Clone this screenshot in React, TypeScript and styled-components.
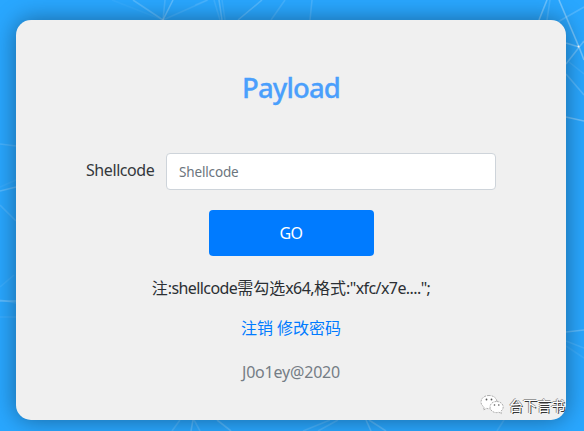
import React from "react";
import styled, { createGlobalStyle } from "styled-components";

const Global = createGlobalStyle`
  * { box-sizing: border-box; }
  body {
    margin: 0;
    background: #29a7ff;
    font-family: "Noto Sans", "Noto Sans CJK SC", sans-serif;
    font-size: 16px;
    line-height: 24px;
    color: #212529;
    overflow: hidden;
  }
`;

const Page = styled.main`
  position: relative;
  height: 431px;
  padding: 20px 18px 11px 16px;
  overflow: hidden;
`;

const Network = styled.svg`
  position: absolute;
  inset: 0;
  stroke: #b4e1ff;
  stroke-width: 1.6;
`;

const Card = styled.section`
  position: relative;
  height: 400px;
  border-radius: 15px;
  background: #f0f0f0;
  box-shadow: 0 0 24px rgba(0, 0, 0, 0.4);
  display: flex;
  flex-direction: column;
  align-items: center;
`;

const Title = styled.h3`
  margin: 51px 0 0;
  font: 500 27.5px/34px "Noto Sans", sans-serif;
  letter-spacing: -0.85px;
  color: #4a9ffc;
  -webkit-text-stroke: 0.3px #4a9ffc;
`;

const Field = styled.label`
  align-self: stretch;
  display: flex;
  margin: 48px 70px 0;
  height: 37px;
`;

const FieldName = styled.span`
  width: 80px;
  padding-top: 5px;
  letter-spacing: -0.42px;
  color: #34383c;
`;

const Input = styled.input`
  flex: 1;
  min-width: 0;
  border: 1px solid #ced4da;
  border-radius: 4px;
  background: #fff;
  padding: 1px 12px 0;
  font: 13.5px "Noto Sans", sans-serif;
  letter-spacing: -0.15px;
  &::placeholder { color: #6c757d; opacity: 1; }
`;

const Go = styled.button`
  width: 165px;
  height: 46px;
  margin-top: 20px;
  padding: 0;
  border: 0;
  border-radius: 4px;
  background: #007bff;
  color: #fff;
  font: 16px/24px "Noto Sans", sans-serif;
  letter-spacing: -0.5px;
`;

const Note = styled.p<{ $top: number; $spacing?: number; $muted?: boolean }>`
  margin: ${(p) => p.$top}px 0 0;
  height: 24px;
  white-space: nowrap;
  letter-spacing: ${(p) => p.$spacing ?? 0}px;
  color: ${(p) => (p.$muted ? "#757d85" : "#2b2f33")};
`;

const Latin = styled.span`
  letter-spacing: -0.58px;
`;

const Link = styled.a`
  color: #007bff;
`;

const Watermark = styled.div`
  position: absolute;
  left: 464px;
  bottom: 3px;
  display: flex;
  align-items: center;
  gap: 5px;
  width: 86px;
  height: 24px;
  overflow: hidden;
  white-space: nowrap;
  font: 14px/22px "Noto Sans CJK SC", sans-serif;
  color: #fff;
  text-shadow: 1px 1px 0 #333, -1px 0 0 #888, 0 -1px 0 #999;
`;

const lines: [number, number, number, number, number][] = [
  [112, 0, 163, 20, 0.06], [133, 0, 163, 20, 0.28], [165, 0, 163, 20, 0.2],
  [173, 0, 163, 20, 0.36], [208, 0, 163, 20, 0.14], [195, 5, 207, 0, 0.1],
  [214, 0, 220, 20, 0.14], [219, 0, 222, 20, 0.3], [222, 0, 225, 20, 0.14],
  [262, 0, 238, 20, 0.28], [285, 0, 271, 20, 0.18], [312, 0, 310, 20, 0.2],
  [547, 0, 539, 20, 0.45], [550, 0, 547, 20, 0.2], [559, 0, 579, 47, 0.5],
  [579, 47, 584, 60, 0.5], [584, 7, 556, 23, 0.25], [566, 43, 579, 47, 0.42],
  [584, 41, 566, 64, 0.38], [569, 62, 584, 74, 0.13], [566, 74, 584, 95, 0.28],
  [566, 117, 584, 121, 0.45], [566, 332, 584, 330, 0.35],
  [566, 341, 584, 348, 0.16], [566, 346, 584, 358, 0.1],
  [0, 144, 16, 146, 0.2], [0, 191, 16, 187, 0.3], [0, 187, 16, 180, 0.08],
  [0, 205, 16, 221, 0.18], [0, 287, 14, 275, 0.1],
  [0, 301, 16, 301, 0.32], [0, 300, 16, 303, 0.15], [0, 317, 16, 317, 0.1],
  [180, 420, 172, 431, 0.2], [193, 420, 191, 431, 0.28], [194, 420, 200, 431, 0.2],
  [217, 420, 231, 431, 0.28], [330, 420, 303, 431, 0.2], [338, 420, 318, 431, 0.2],
  [366, 420, 371, 431, 0.28], [369, 420, 386, 431, 0.28], [504, 420, 497, 431, 0.16],
];

export default function App() {
  return (
    <>
      <Global />
      <Page>
        <Network width="584" height="431" aria-hidden="true">
          {lines.map(([x1, y1, x2, y2, o], i) => (
            <line key={i} x1={x1} y1={y1} x2={x2} y2={y2} opacity={o} />
          ))}
          <circle cx="578.5" cy="46.5" r="1" fill="#fff" stroke="none" />
        </Network>
        <Card>
          <Title>Payload</Title>
          <Field>
            <FieldName>Shellcode</FieldName>
            <Input placeholder="Shellcode" />
          </Field>
          <Go>GO</Go>
          <Note $top={20}>
            注<Latin>:shellcode</Latin>需勾选<Latin>x64,</Latin>格式<Latin>:"xfc/x7e....";</Latin>
          </Note>
          <Note $top={16}>
            <Link>注销</Link> <Link>修改密码</Link>
          </Note>
          <Note $top={20} $spacing={-0.2} $muted>
            J0o1ey@2020
          </Note>
          <Watermark>
            <svg width="24" height="22" viewBox="0 0 24 22" aria-hidden="true">
              <g fill="#fff" stroke="#999" strokeWidth="0.8" strokeDasharray="2 1">
                <path d="M9 1.5C4.5 1.5 1 4.2 1 8c0 2.300 1.200 4 3.200 5.200L3.500 16l3-1.600c1 .3 2.300.4 3.500.3 4.500-.3 7-3.300 7-6.700 0-3.800-3.500-6.500-8-6.500Z" />
                <path d="M16.500 7.500c-3.800 0-6.500 2.400-6.500 5.500s2.700 5.600 6.500 5.600c.9 0 1.600-.1 2.400-.4l2.400 1.500-.5-2.400c1.500-1.100 2.400-2.600 2.400-4.300 0-3.100-2.900-5.500-6.700-5.500Z" />
              </g>
              <g fill="#555">
                <circle cx="6.500" cy="5.500" r="0.9" />
                <circle cx="11.500" cy="5.500" r="0.9" />
                <circle cx="14.500" cy="11" r="0.8" />
                <circle cx="18.800" cy="11" r="0.8" />
              </g>
            </svg>
            <span>台下言书</span>
          </Watermark>
        </Card>
      </Page>
    </>
  );
}
